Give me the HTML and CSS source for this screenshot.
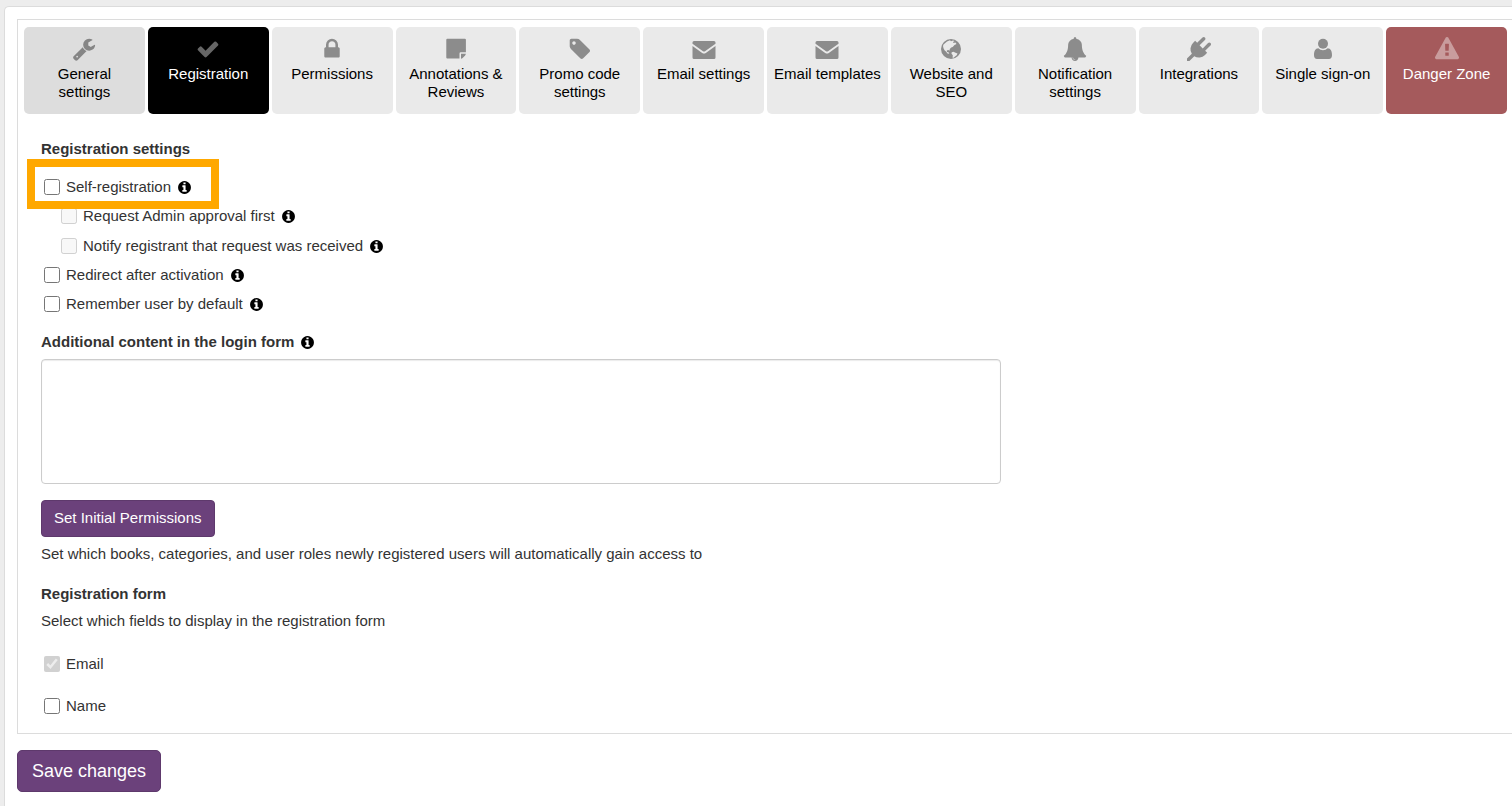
FILE: index.html
```html
<!DOCTYPE html>
<html lang="en">
<head>
  <meta charset="UTF-8">
  <meta name="viewport" content="width=device-width, initial-scale=1.0">
  <title>Registration settings</title>
  <link rel="stylesheet" href="styles.css">
</head>
<body>
  <svg class="sprite" aria-hidden="true">
    <symbol id="info" viewBox="0 0 1792 1792"><path d="M1152 1376v-160q0-14-9-23t-23-9h-96v-512q0-14-9-23t-23-9h-320q-14 0-23 9t-9 23v160q0 14 9 23t23 9h96v320h-96q-14 0-23 9t-9 23v160q0 14 9 23t23 9h448q14 0 23-9t9-23zm-128-896v-160q0-14-9-23t-23-9h-192q-14 0-23 9t-9 23v160q0 14 9 23t23 9h192q14 0 23-9t9-23zm640 416q0 209-103 385.500t-279.500 279.500-385.500 103-385.500-103-279.500-279.500-103-385.500 103-385.500 279.500-279.500 385.500-103 385.500 103 279.500 279.500 103 385.500z"/></symbol>
    <symbol id="envelope" viewBox="0 0 24 24"><path d="M2 4h20a1.500 1.500 0 0 1 1.500 1.500v1.200L13 14.200a1.800 1.800 0 0 1-2 0L.5 6.700V5.500A1.500 1.500 0 0 1 2 4z"/><path d="M.5 9l9.700 6.900a3.200 3.200 0 0 0 3.600 0L23.500 9v11.500A1.500 1.500 0 0 1 22 22H2a1.500 1.500 0 0 1-1.500-1.500z"/></symbol>
  </svg>

  <main class="panel">
    <div class="settings">
      <nav class="tabs">
        <a class="tab tab-hover" href="#">
          <svg class="icon" viewBox="0 0 1792 1792"><path d="M448 1472q0-26-19-45t-45-19-45 19-19 45 19 45 45 19 45-19 19-45zm644-420l-682 682q-37 37-90 37-52 0-91-37l-106-108q-38-36-38-90 0-53 38-91l681-681q39 98 114.500 173.500t173.500 114.500zm634-435q0 39-23 106-47 134-164.500 217.500t-258.500 83.500q-185 0-316.500-131.500t-131.500-316.500 131.500-316.500 316.500-131.500q58 0 121.500 16.500t107.500 46.500q16 11 16 28t-16 28l-293 169v224l193 107q5-3 79-48.500t135.500-81 70.500-35.500q15 0 23.500 10t8.500 25z"/></svg>
          <span>General settings</span>
        </a>
        <a class="tab tab-active" href="#">
          <svg class="icon" viewBox="0 0 1792 1792"><path d="M1671 566q0 40-28 68l-724 724-136 136q-28 28-68 28t-68-28l-136-136-362-362q-28-28-28-68t28-68l136-136q28-28 68-28t68 28l294 295 656-657q28-28 68-28t68 28l136 136q28 28 28 68z"/></svg>
          <span>Registration</span>
        </a>
        <a class="tab" href="#">
          <svg class="icon" viewBox="0 0 1792 1792"><path d="M640 768h512v-192q0-106-75-181t-181-75-181 75-75 181v192zm832 96v576q0 40-28 68t-68 28h-960q-40 0-68-28t-28-68v-576q0-40 28-68t68-28h32v-192q0-184 132-316t316-132 316 132 132 316v192h32q40 0 68 28t28 68z"/></svg>
          <span>Permissions</span>
        </a>
        <a class="tab" href="#">
          <svg class="icon" viewBox="0 0 24 24"><path d="M3.300 1.800h17.600a1 1 0 0 1 1 1v12.500h-5.200a1.200 1.200 0 0 0-1.200 1.200v5.100H3.300a1 1 0 0 1-1-1V2.800a1 1 0 0 1 1-1z"/><path d="M17 16.800h4.900c-.1.600-.3 1.100-.8 1.600l-2.500 2.500c-.4.400-1 .7-1.600.8z"/></svg>
          <span>Annotations &amp; Reviews</span>
        </a>
        <a class="tab" href="#">
          <svg class="icon" viewBox="0 0 1792 1792"><path d="M576 448q0-53-37.500-90.500t-90.500-37.500-90.500 37.500-37.500 90.500 37.500 90.500 90.500 37.500 90.500-37.500 37.500-90.500zm1067 576q0 53-37 90l-491 492q-39 37-91 37-53 0-90-37l-715-716q-38-37-64.500-101t-26.500-117v-416q0-52 38-90t90-38h416q53 0 117 26.500t102 64.500l715 714q37 39 37 91z"/></svg>
          <span>Promo code settings</span>
        </a>
        <a class="tab" href="#">
          <svg class="icon"><use href="#envelope"/></svg>
          <span>Email settings</span>
        </a>
        <a class="tab" href="#">
          <svg class="icon"><use href="#envelope"/></svg>
          <span>Email templates</span>
        </a>
        <a class="tab" href="#">
          <svg class="icon" viewBox="0 0 24 24"><path fill-rule="evenodd" d="M12 2a10 10 0 1 0 0 20 10 10 0 0 0 0-20zM8 4.500l3-1.200 1 1 2-.8 1.500.6-1.500 1 .5 1 2-.6 1 1.500-2 1-1.800 2-1.500.4-1.400 1.600-.3 1.800-1.200-.8-1.500.5.2 1.600 1.500.2.800 1.500-1.800-.4-1.500-1.800-1.500-1.400-1-2-.5-2.200.5-1.500zM12.700 15.200l1.800-.5 2 1 2 .9-.8 1.700-1.700 1.200-1.400 1.200h-1l.2-2.500-1.300-1.500z"/></svg>
          <span>Website and SEO</span>
        </a>
        <a class="tab" href="#">
          <svg class="icon" viewBox="0 0 1792 1792"><path d="M912 1696q0-16-16-16-59 0-101.500-42.500t-42.500-101.500q0-16-16-16t-16 16q0 73 51.500 124.500t124.500 51.500q16 0 16-16zm816-288q0 52-38 90t-90 38h-448q0 106-75 181t-181 75-181-75-75-181h-448q-52 0-90-38t-38-90q50-42 91-88t85-119.500 74.500-158.500 50-206 19.500-260q0-152 117-282.500t307-158.500q-8-19-8-39 0-40 28-68t68-28 68 28 28 68q0 20-8 39 190 28 307 158.500t117 282.500q0 139 19.500 260t50 206 74.500 158.500 85 119.500 91 88z"/></svg>
          <span>Notification settings</span>
        </a>
        <a class="tab" href="#">
          <svg class="icon" viewBox="0 0 1792 1792"><path d="M1755 453q37 38 37 90.500t-37 90.500l-401 400 150 150-160 160q-163 163-389.500 186.500t-411.500-100.500l-362 362h-181v-181l362-362q-124-185-100.500-411.500t186.500-389.500l160-160 150 150 400-401q38-37 91-37t90 37 37 90.500-37 90.500l-400 401 234 234 401-400q38-37 91-37t90 37z"/></svg>
          <span>Integrations</span>
        </a>
        <a class="tab" href="#">
          <svg class="icon" viewBox="0 0 24 24"><circle cx="12" cy="6.700" r="5"/><path d="M7.300 11.300a6.800 6.800 0 0 0 9.400 0c3 .2 4.300 3 4.300 7 0 2.400-1.200 3.700-3 3.700H6c-1.800 0-3-1.300-3-3.700 0-4 1.300-6.800 4.300-7z"/></svg>
          <span>Single sign-on</span>
        </a>
        <a class="tab tab-danger" href="#">
          <svg class="icon" viewBox="0 0 1792 1792"><path d="M1024 1375v-190q0-14-9.500-23.500t-22.500-9.500h-192q-13 0-22.500 9.500t-9.500 23.500v190q0 14 9.500 23.500t22.500 9.500h192q13 0 22.500-9.500t9.500-23.500zm-2-374l18-459q0-12-10-19-13-11-24-11h-220q-11 0-24 11-10 7-10 21l17 457q0 10 10 16.500t24 6.500h185q14 0 23.500-6.500t10.500-16.500zm-14-934l768 1408q35 63-2 126-17 29-46.500 46t-63.500 17h-1536q-34 0-63.500-17t-46.500-46q-37-63-2-126l768-1408q17-31 47-49t65-18 65 18 47 49z"/></svg>
          <span>Danger Zone</span>
        </a>
      </nav>

      <form class="content" id="registration-form">
        <h2>Registration settings</h2>
        <div class="options">
          <div class="check highlight">
            <input type="checkbox" id="self-registration">
            <label for="self-registration">Self-registration</label>
            <svg class="info"><use href="#info"/></svg>
          </div>
          <div class="sub-options">
            <div class="check">
              <input type="checkbox" id="admin-approval" disabled>
              <label for="admin-approval">Request Admin approval first</label>
              <svg class="info"><use href="#info"/></svg>
            </div>
            <div class="check">
              <input type="checkbox" id="notify" disabled>
              <label for="notify">Notify registrant that request was received</label>
              <svg class="info"><use href="#info"/></svg>
            </div>
          </div>
          <div class="check">
            <input type="checkbox" id="redirect">
            <label for="redirect">Redirect after activation</label>
            <svg class="info"><use href="#info"/></svg>
          </div>
          <div class="check">
            <input type="checkbox" id="remember">
            <label for="remember">Remember user by default</label>
            <svg class="info"><use href="#info"/></svg>
          </div>
        </div>

        <div class="field-title">
          <label for="login-content">Additional content in the login form</label>
          <svg class="info"><use href="#info"/></svg>
        </div>
        <textarea id="login-content"></textarea>

        <button type="button" class="btn">Set Initial Permissions</button>
        <p class="help">Set which books, categories, and user roles newly registered users will automatically gain access to</p>

        <h2>Registration form</h2>
        <p class="help">Select which fields to display in the registration form</p>
        <div class="fields">
          <div class="check">
            <input type="checkbox" id="email" checked disabled>
            <label for="email">Email</label>
          </div>
          <div class="check">
            <input type="checkbox" id="name">
            <label for="name">Name</label>
          </div>
        </div>
      </form>
    </div>
    <button type="submit" form="registration-form" class="btn btn-large">Save changes</button>
  </main>
</body>
</html>
```

FILE: styles.css
```css
*,
*::after {
  box-sizing: border-box;
}

body {
  margin: 0;
  padding: 6px 0 0 4px;
  background: #ededed;
  color: #333;
  font-family: "Liberation Sans", Arial, sans-serif;
  font-size: 15px;
  line-height: 20px;
}

.sprite {
  display: none;
}

.panel {
  min-height: calc(100vh - 6px);
  padding: 12px 0 12px 12px;
  background: #fff;
  border: 1px solid #dcdcdc;
  border-width: 1px 0 0 1px;
  border-radius: 5px 0 0 0;
}

.settings {
  border: 1px solid #dcdcdc;
  border-right: none;
}

/* tabs */
.tabs {
  display: grid;
  grid-template-columns: repeat(12, 1fr);
  gap: 3px;
  padding: 7px 5px 0 6px;
}

.tab {
  display: flex;
  flex-direction: column;
  align-items: center;
  gap: 4px;
  min-height: 87px;
  padding: 10px 6px 12px;
  background: #eaeaea;
  border-radius: 5px;
  color: #000;
  line-height: 18px;
  text-align: center;
  text-decoration: none;
}

.icon {
  width: 24px;
  height: 24px;
  fill: #8c8c8c;
}

.tab-hover {
  background: #ddd;
}

.tab-hover .icon {
  fill: #858585;
}

.tab-active {
  background: #000;
  color: #fff;
}

.tab-active .icon {
  fill: #666;
}

.tab-danger {
  background: #a55a5c;
  color: #fff;
}

.tab-danger .icon {
  fill: #c99c9d;
}

/* form */
.content {
  padding: 25px 23px 17px;
}

h2 {
  margin: 0;
  font-size: 15px;
  line-height: 20px;
}

.options {
  display: flex;
  flex-direction: column;
  gap: 9px;
  margin: 18px 0;
  padding-left: 3px;
}

.sub-options {
  display: flex;
  flex-direction: column;
  gap: 10px;
  padding-left: 17px;
}

.check,
.field-title {
  display: flex;
  align-items: center;
  gap: 6px;
}

.field-title {
  font-weight: bold;
}

.check input {
  width: 16px;
  height: 16px;
  margin: 0;
}

.info {
  width: 15px;
  height: 15px;
  fill: #000;
}

.highlight {
  position: relative;
}

.highlight::after {
  content: "";
  position: absolute;
  top: -18px;
  left: -17px;
  width: 192px;
  height: 50px;
  border: 8px solid #ffa800;
  pointer-events: none;
}

textarea {
  display: block;
  width: 100%;
  max-width: 960px;
  height: 125px;
  margin: 7px 0 16px;
  border: 1px solid #ccc;
  border-radius: 4px;
  box-shadow: inset 0 1px 1px rgba(0, 0, 0, 0.08);
  font: inherit;
  resize: none;
}

.btn {
  padding: 7px 12px 9px;
  background: #6b417b;
  border: 1px solid #5e396c;
  border-radius: 4px;
  color: #fff;
  font: inherit;
  line-height: 19px;
  cursor: pointer;
}

.btn-large {
  margin-top: 16px;
  padding: 10px 14px;
  border-radius: 5px;
  font-size: 18px;
  line-height: 20px;
}

.help {
  margin: 7px 0 20px;
}

.fields {
  display: flex;
  flex-direction: column;
  gap: 22px;
  padding: 3px 0 0 3px;
}
```
